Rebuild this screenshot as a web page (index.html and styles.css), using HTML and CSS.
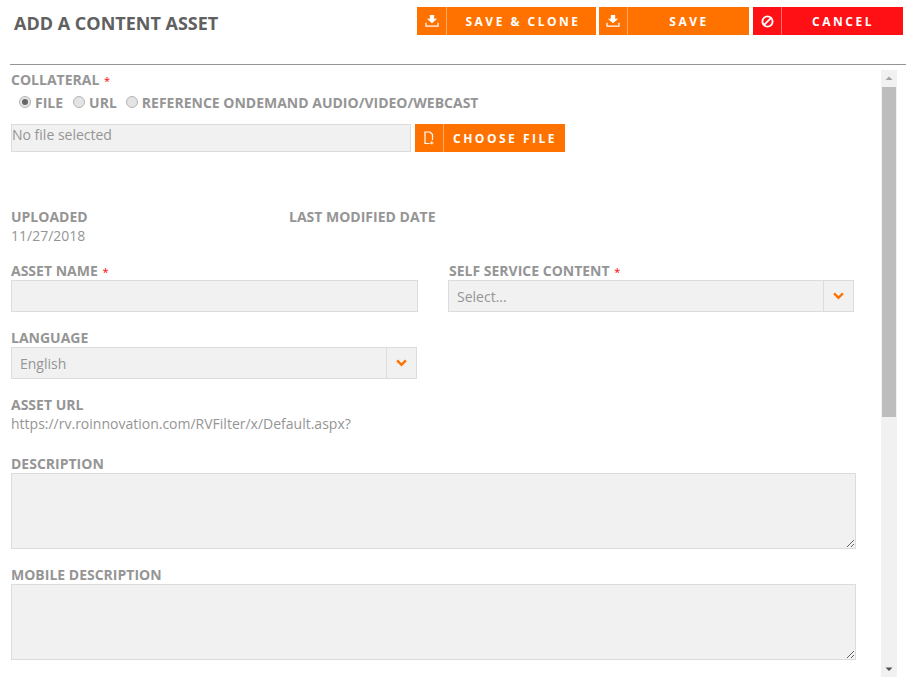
FILE: index.html
```html
<!DOCTYPE html>
<html lang="en">
<head>
<meta charset="utf-8">
<title>Add a Content Asset</title>
<link rel="stylesheet" href="styles.css">
</head>
<body>
<header class="topbar">
  <h1 class="title">ADD A CONTENT ASSET</h1>
  <div class="actions">
    <button class="btn btn-clone"><span class="btn-icon"><svg width="14" height="12" viewBox="0 0 16 14"><path d="M5.500 0h5v4.500H14L8 9.500 2 4.500h3.500z" fill="#fff"/><path d="M1 9v4h14V9" fill="none" stroke="#fff" stroke-width="1.500"/></svg></span><span class="btn-text">SAVE &amp; CLONE</span></button>
    <button class="btn btn-save"><span class="btn-icon"><svg width="14" height="12" viewBox="0 0 16 14"><path d="M5.500 0h5v4.500H14L8 9.500 2 4.500h3.500z" fill="#fff"/><path d="M1 9v4h14V9" fill="none" stroke="#fff" stroke-width="1.500"/></svg></span><span class="btn-text">SAVE</span></button>
    <button class="btn btn-cancel"><span class="btn-icon"><svg width="13" height="13" viewBox="0 0 14 14"><circle cx="7" cy="7" r="5.500" fill="none" stroke="#fff" stroke-width="2"/><path d="M3.300 10.700l7.400-7.400" stroke="#fff" stroke-width="2"/></svg></span><span class="btn-text">CANCEL</span></button>
  </div>
</header>
<div class="body">
  <main class="form">
    <div class="label">COLLATERAL <span class="req">*</span></div>
    <div class="radios">
      <span class="radio checked"></span><span class="label opt">FILE</span>
      <span class="radio"></span><span class="label opt opt-tight">URL</span>
      <span class="radio"></span><span class="label opt">REFERENCE ONDEMAND AUDIO/VIDEO/WEBCAST</span>
    </div>
    <div class="file-row">
      <div class="file-box">No file selected</div>
      <button class="btn btn-file"><span class="btn-icon"><svg width="10" height="14" viewBox="0 0 10 14"><path d="M5.500 12.500H1V1h5l2.500 2.500V9" fill="none" stroke="#fff" stroke-width="1.200"/><path d="M6 12h3.500M7.800 10.200v3.300" stroke="#fff" stroke-width="1"/></svg></span><span class="btn-text">CHOOSE FILE</span></button>
    </div>
    <div class="meta-row">
      <div class="meta-col">
        <div class="label">UPLOADED</div>
        <div class="value">11/27/2018</div>
      </div>
      <div class="label">LAST MODIFIED DATE</div>
    </div>
    <div class="two-col">
      <div class="field-name">
        <div class="label">ASSET NAME <span class="req">*</span></div>
        <div class="input"></div>
      </div>
      <div class="field-self">
        <div class="label">SELF SERVICE CONTENT <span class="req">*</span></div>
        <div class="select"><span class="select-text">Select...</span><span class="chev"><svg width="11" height="8" viewBox="0 0 10 7"><path d="M1 1.200l4 4 4-4" fill="none" stroke="#ff7200" stroke-width="2.200"/></svg></span></div>
      </div>
    </div>
    <div class="field-lang">
      <div class="label">LANGUAGE</div>
      <div class="select"><span class="select-text">English</span><span class="chev"><svg width="11" height="8" viewBox="0 0 10 7"><path d="M1 1.200l4 4 4-4" fill="none" stroke="#ff7200" stroke-width="2.200"/></svg></span></div>
    </div>
    <div class="field-url">
      <div class="label">ASSET URL</div>
      <div class="value">https://rv.roinnovation.com/RVFilter/x/Default.aspx?</div>
    </div>
    <div class="field-desc">
      <div class="label">DESCRIPTION</div>
      <textarea class="area"></textarea>
    </div>
    <div class="field-desc second">
      <div class="label">MOBILE DESCRIPTION</div>
      <textarea class="area"></textarea>
    </div>
  </main>
  <aside class="scrollbar">
    <svg class="arrow" width="16" height="16" viewBox="0 0 16 16"><path d="M4.500 10L8 6.500l3.500 3.500z" fill="#a3a3a3"/></svg>
    <div class="thumb"></div>
    <div class="track"></div>
    <svg class="arrow" width="16" height="16" viewBox="0 0 16 16"><path d="M4.500 6.500L8 10l3.500-3.500z" fill="#505050"/></svg>
  </aside>
</div>
</body>
</html>
```
FILE: styles.css
```css
* { box-sizing: border-box; }
html, body { margin: 0; padding: 0; }
body {
  width: 919px;
  height: 678px;
  overflow: hidden;
  background: #fff;
  font-family: "Open Sans", sans-serif;
  font-size: 14px;
  color: #959595;
}
.topbar {
  display: flex;
  justify-content: space-between;
  margin: 0 13px 0 10px;
  height: 65px;
  padding: 7px 3px 0 4px;
  border-bottom: 1px solid #959595;
}
.title {
  margin: 0;
  font-size: 18px;
  line-height: 32px;
  font-weight: 700;
  color: #606060;
}
.actions { display: flex; height: 28px; }
.btn {
  display: flex;
  align-items: stretch;
  height: 28px;
  padding: 0;
  border: 0;
  background: #ff7200;
  color: #fff;
  font-family: inherit;
  font-size: 12px;
  font-weight: 700;
  letter-spacing: 2.500px;
}
.btn-clone { width: 179px; }
.btn-save { width: 150px; margin-left: 3px; }
.btn-cancel { width: 150px; margin-left: 4px; background: #ff1015; }
.btn-file { width: 150px; margin-left: 4px; }
.btn-icon {
  width: 30px;
  flex: none;
  display: flex;
  align-items: center;
  justify-content: center;
  border-right: 1px solid rgba(255, 255, 255, .4);
}
.btn-cancel .btn-icon, .btn-save .btn-icon { width: 29px; }
.btn-file .btn-icon { width: 29px; }
.btn-text {
  flex: 1;
  padding: 1px 0 0 1px;
  line-height: 28px;
  text-align: center;
}
.btn-clone .btn-text { padding-left: 3px; }
.body { display: flex; height: 613px; }
.form { width: 881px; padding: 6px 0 0 11px; }
.label {
  font-size: 14px;
  line-height: 18px;
  font-weight: 700;
  color: #959595;
}
.req { color: #f00; margin-left: 1px; font-size: 11px; font-weight: 400; line-height: 1; }
.radios {
  display: flex;
  align-items: center;
  height: 19px;
  margin: 4px 0 0 8px;
}
.radio {
  width: 12px;
  height: 12px;
  margin-top: -2px;
  border-radius: 50%;
  border: 1px solid #b4b4b4;
  background: #e4e4e4;
  display: flex;
  align-items: center;
  justify-content: center;
}
.radio.checked::after {
  content: "";
  width: 6px;
  height: 6px;
  border-radius: 50%;
  background: #666;
}
.opt { margin: 0 10px 0 4px; }
.opt-tight { margin-right: 9px; }
.file-row { display: flex; margin-top: 12px; }
.file-box {
  width: 400px;
  height: 28px;
  line-height: 19px;
  border: 1px solid #dcdcdc;
  background: #f1f1f1;
}
.meta-row { display: flex; margin-top: 56px; }
.meta-col { width: 278px; }
.value { line-height: 19px; }
.two-col { display: flex; margin-top: 17px; }
.field-name { width: 407px; margin-right: 30px; }
.field-self { width: 406px; }
.field-self .label { margin-left: 1px; }
.input, .select {
  height: 32px;
  border: 1px solid #dcdcdc;
  background: #f1f1f1;
}
.select { display: flex; align-items: stretch; }
.select-text { flex: 1; padding-left: 8px; line-height: 31px; }
.chev {
  width: 30px;
  display: flex;
  align-items: center;
  justify-content: center;
  padding-bottom: 1px;
  border-left: 1px solid #dcdcdc;
}
.field-lang { width: 406px; margin-top: 17px; }
.field-url { margin-top: 17px; }
.field-desc { margin-top: 22px; }
.field-desc.second { margin-top: 17px; }
.area {
  display: block;
  width: 845px;
  height: 76px;
  margin: 0;
  border: 1px solid #dcdcdc;
  border-radius: 0;
  outline: 0;
  background: #f1f1f1;
}
.scrollbar {
  width: 16px;
  margin-top: 5px;
  height: 607px;
  display: flex;
  flex-direction: column;
  background: #f1f1f1;
}
.arrow { flex: none; display: block; }
.thumb { height: 330px; flex: none; margin: 1px 1px 0; background: #bdbdbd; }
.track { flex: 1; }
```
